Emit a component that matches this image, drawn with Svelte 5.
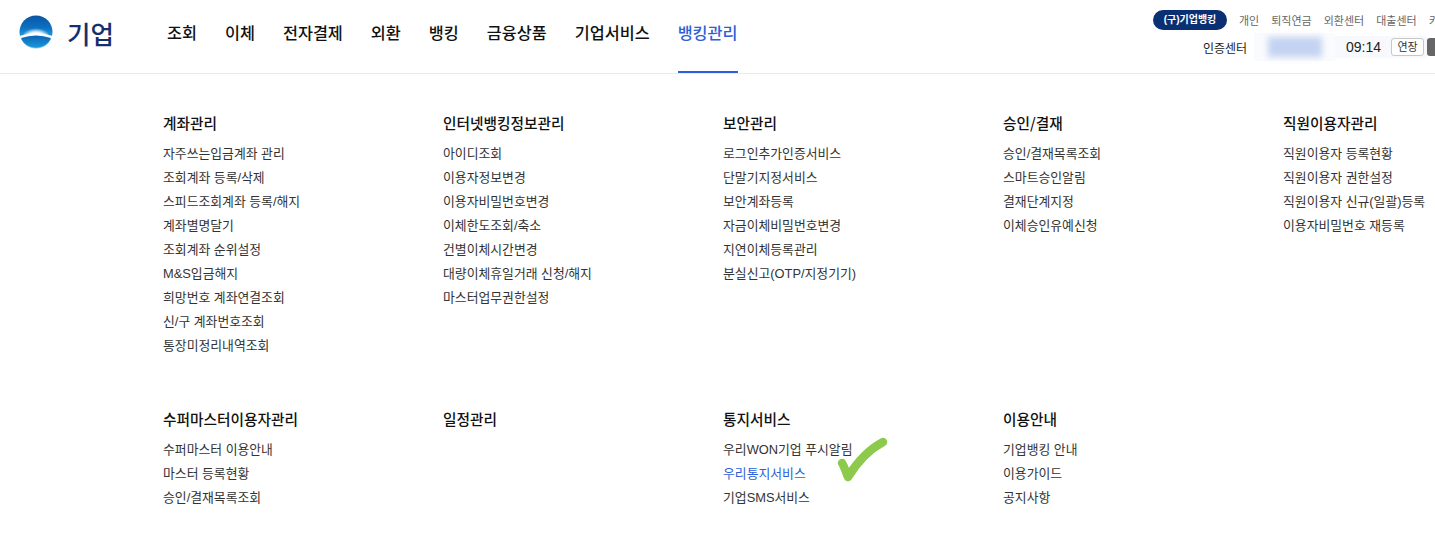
<script>
	const nav = ['조회', '이체', '전자결제', '외환', '뱅킹', '금융상품', '기업서비스', '뱅킹관리'];
	const util = ['개인', '퇴직연금', '외환센터', '대출센터', '키오스크'];
	const groups = [
		{ title: '계좌관리', items: ['자주쓰는입금계좌 관리', '조회계좌 등록/삭제', '스피드조회계좌 등록/해지', '계좌별명달기', '조회계좌 순위설정', 'M&S입금해지', '희망번호 계좌연결조회', '신/구 계좌번호조회', '통장미정리내역조회'] },
		{ title: '인터넷뱅킹정보관리', items: ['아이디조회', '이용자정보변경', '이용자비밀번호변경', '이체한도조회/축소', '건별이체시간변경', '대량이체휴일거래 신청/해지', '마스터업무권한설정'] },
		{ title: '보안관리', items: ['로그인추가인증서비스', '단말기지정서비스', '보안계좌등록', '자금이체비밀번호변경', '지연이체등록관리', '분실신고(OTP/지정기기)'] },
		{ title: '승인/결재', items: ['승인/결재목록조회', '스마트승인알림', '결재단계지정', '이체승인유예신청'] },
		{ title: '직원이용자관리', items: ['직원이용자 등록현황', '직원이용자 권한설정', '직원이용자 신규(일괄)등록', '이용자비밀번호 재등록'] },
		{ title: '수퍼마스터이용자관리', items: ['수퍼마스터 이용안내', '마스터 등록현황', '승인/결재목록조회'] },
		{ title: '일정관리', items: [] },
		{ title: '통지서비스', items: ['우리WON기업 푸시알림', '우리통지서비스', '기업SMS서비스'] },
		{ title: '이용안내', items: ['기업뱅킹 안내', '이용가이드', '공지사항'] }
	];
</script>

<div class="page">
	<header>
		<a class="logo" href="#top">
			<svg width="34" height="34" viewBox="0 0 34 34">
				<defs>
					<linearGradient id="dome" x1="0" y1="0" x2="0" y2="1">
						<stop offset="0" stop-color="#0b55a4" />
						<stop offset="0.35" stop-color="#0b6fc0" />
						<stop offset="0.7" stop-color="#27a5e6" />
						<stop offset="1" stop-color="#7fd0f2" />
					</linearGradient>
					<linearGradient id="bowl" x1="0" y1="0" x2="0" y2="1">
						<stop offset="0" stop-color="#0a62b4" />
						<stop offset="1" stop-color="#1b98dc" />
					</linearGradient>
					<radialGradient id="glow" cx="0.5" cy="0.75" r="0.55">
						<stop offset="0" stop-color="#fff" />
						<stop offset="0.55" stop-color="#fff" stop-opacity="0.9" />
						<stop offset="1" stop-color="#fff" stop-opacity="0" />
					</radialGradient>
				</defs>
				<circle cx="17" cy="17" r="16.5" fill="url(#dome)" />
				<ellipse cx="17" cy="18" rx="13" ry="8" fill="url(#glow)" />
				<path d="M.5 21 Q17 15 33.5 21 L33 24 L1 24Z" fill="#fff" />
				<path d="M2 23 Q17 18 32 23 A16.5 16.5 0 0 1 2 23Z" fill="url(#bowl)" />
			</svg>
			<span>기업</span>
		</a>
		<nav>
			{#each nav as n, i}
				<a href="#top" class:on={i === nav.length - 1}>{n}</a>
			{/each}
		</nav>
		<div class="side">
			<div class="util">
				<span class="pill">(구)기업뱅킹</span>
				{#each util as u}<a href="#top">{u}</a>{/each}
			</div>
			<div class="session">
				<span class="cert">인증센터</span>
				<span class="masked"><i></i></span>
				<span class="timer">
					<span class="time">09:14</span>
					<button class="extend">연장</button>
				</span>
				<button class="logout">로그아웃</button>
			</div>
		</div>
	</header>

	<main>
		{#each groups as g}
			<section>
				<h3>{g.title}</h3>
				<ul>
					{#each g.items as item}
						<li class:active={item === '우리통지서비스'}>{item}</li>
					{/each}
				</ul>
			</section>
		{/each}
		<svg class="check" width="54" height="52" viewBox="0 0 54 52">
			<path d="M6 27 C8 30 10 36 12 41 C20 28 32 14 47 6" fill="none" stroke="#8dc94c" stroke-width="8.5" stroke-linecap="round" stroke-linejoin="round" />
		</svg>
	</main>
</div>

<style>
	:global(body) {
		overflow: hidden;
		background: #fff;
	}

	.page {
		position: relative;
		width: 1435px;
		height: 549px;
		overflow: hidden;
		font-family: 'Liberation Sans', 'Noto Sans CJK KR', sans-serif;
		color: #222;
	}

	header {
		display: flex;
		height: 73px;
		border-bottom: 1px solid #e9e9e9;
	}

	.logo {
		display: flex;
		align-items: center;
		gap: 14px;
		width: 167px;
		flex: none;
		height: 64px;
		padding-left: 19px;
		box-sizing: border-box;
		color: #14306f;
		font-size: 25.5px;
		font-weight: 500;
		text-decoration: none;
	}

	nav {
		display: flex;
		gap: 28px;
		flex: none;
		width: 986px;
	}

	nav a {
		height: 73px;
		box-sizing: border-box;
		padding-top: 20px;
		color: #111;
		font-size: 16.3px;
		line-height: 24px;
		font-family: 'Noto Sans CJK KR', sans-serif;
		font-weight: 500;
		text-decoration: none;
	}

	nav a.on {
		color: #2d60d8;
		border-bottom: 2px solid #2d60d8;
	}

	.side {
		flex: none;
		width: 320px;
	}

	.util {
		display: flex;
		align-items: center;
		gap: 12px;
		height: 20px;
		margin-top: 10px;
		white-space: nowrap;
	}

	.util a {
		flex: none;
		color: #666;
		font-size: 11px;
		text-decoration: none;
	}

	.pill {
		flex: none;
		width: 74px;
		height: 20px;
		line-height: 20px;
		text-align: center;
		background: #0a2f72;
		color: #fff;
		border-radius: 10px;
		font-size: 10px;
		font-weight: 700;
	}

	.session {
		display: flex;
		align-items: center;
		height: 18px;
		margin-top: 8px;
		padding-left: 50px;
		white-space: nowrap;
	}

	.cert {
		flex: none;
		width: 51px;
		font-size: 12px;
		color: #222;
	}

	.masked {
		flex: none;
		width: 81px;
		height: 28px;
		display: flex;
		align-items: center;
		justify-content: center;
		background: #fafbfd;
	}

	.masked i {
		width: 54px;
		height: 20px;
		margin-top: -1px;
		background: #c4d3f1;
		filter: blur(3px);
	}

	.timer {
		flex: none;
		display: flex;
		align-items: center;
		width: 92px;
		height: 22px;
		padding-left: 11px;
		box-sizing: border-box;
		background: #f7f9fc;
	}

	.time {
		width: 45px;
		flex: none;
		font-size: 14px;
		color: #222;
	}

	button {
		font-family: inherit;
		height: 18px;
		padding: 0;
		box-sizing: border-box;
		border-radius: 3px;
		font-size: 11px;
		line-height: 14px;
		flex: none;
	}

	.extend {
		width: 33px;
		background: #fff;
		border: 1px solid #c8c8c8;
		color: #333;
	}

	.logout {
		width: 60px;
		background: #666;
		border: 0;
		color: #fff;
	}

	main {
		position: relative;
		display: grid;
		grid-template-columns: repeat(5, 280px);
		grid-template-rows: 296px auto;
		padding: 37px 0 0 163px;
	}

	h3 {
		margin: 0;
		height: 24px;
		font-size: 14.7px;
		line-height: 24px;
		font-weight: 500;
		font-family: 'Noto Sans CJK KR', sans-serif;
		color: #111;
	}

	ul {
		list-style: none;
		margin: 7px 0 0;
		padding: 0;
	}

	li {
		height: 24px;
		line-height: 24px;
		font-size: 12.85px;
		color: #333;
		white-space: nowrap;
	}

	li.active {
		color: #2d60d8;
	}

	.check {
		position: absolute;
		left: 836px;
		top: 362px;
	}
</style>
